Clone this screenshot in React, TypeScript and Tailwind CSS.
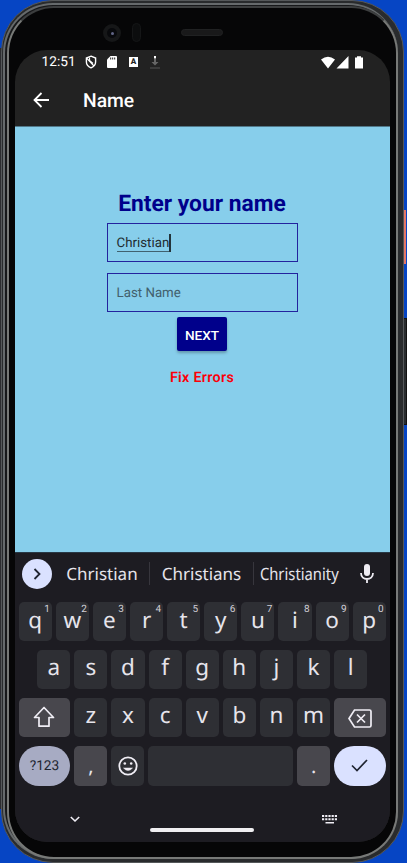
import type { ReactNode } from 'react';

const digits = ['1', '2', '3', '4', '5', '6', '7', '8', '9', '0'];

function Key({ children, hint, className = '' }: { children?: ReactNode; hint?: string; className?: string }) {
  return (
    <div
      className={`relative flex min-w-0 items-center justify-center rounded-[5px] leading-none text-[#e6e4eb] ${className}`}
    >
      {children}
      {hint && (
        <span className="absolute right-[2px] top-[2px] font-['Roboto'] text-[10px] leading-[11px] text-[#d0ced6]">{hint}</span>
      )}
    </div>
  );
}

function StatusBar() {
  return (
    <div className="flex h-6 items-center pl-[26.5px] pr-[27px] text-white">
      <span className="w-[43.500px] pt-[2px] text-[13.700px] leading-none">12:51</span>
      <svg className="h-[14px] w-3" viewBox="0 0 12 14" fill="none" stroke="#fff" strokeWidth="1.400">
        <path d="M6 1.200 10.600 3v4c0 2.800-2 4.800-4.600 5.800C3.400 11.800 1.400 9.800 1.400 7V3z" />
        <path d="M1.600 3.200 9 11M4.500 2.500v3l3.500 3" strokeWidth="1.200" />
      </svg>
      <svg className="ml-[10px] h-3 w-[10px]" viewBox="0 0 10 12">
        <path d="M3.500 0H9a1 1 0 0 1 1 1v10a1 1 0 0 1-1 1H1a1 1 0 0 1-1-1V3.500z" fill="#fff" />
        <path d="M3.700 1.500v2M5.700 1.500v2M7.700 1.500v2" stroke="#222" />
      </svg>
      <div className="ml-[12px] flex h-[10px] w-[9px] items-center justify-center bg-white text-[8px] font-black leading-none text-[#222]">
        A
      </div>
      <svg className="ml-3 h-[13px] w-[10px]" viewBox="0 0 10 13">
        <path d="M4 3h2v3h2.500L5 9.500 1.500 6H4z" fill="#666" />
        <path d="M4 0h2v2.500H4z" fill="#fff" />
        <path d="M0 12h10" stroke="#555" strokeWidth="1.200" />
      </svg>
      <svg className="ml-auto h-[13px] w-[42px]" viewBox="0 0 42 13" fill="#fff">
        <path d="M0 3.500Q7-2 14 3.500L7 12.500zM15.500 12.500 27.500 0v12.500zM34 1.500h2V.3h4v1.200h2v11h-8z" />
      </svg>
    </div>
  );
}

function Keyboard() {
  return (
    <div className="flex h-[290px] flex-col border-t border-[#283845] bg-[#1d1c22] pl-[3.700px] pr-[4.300px] font-['Noto_Sans',sans-serif]">
      <div className="flex h-[41px] items-center pl-[3.300px] text-[17px] leading-none text-[#e6e4eb]">
        <div className="flex h-[30px] w-[30px] items-center justify-center rounded-full bg-[#dae1ff]">
          <svg className="h-3 w-3" viewBox="0 0 12 12" fill="none" stroke="#202532" strokeWidth="1.800">
            <path d="m3.500 1 5 5-5 5" />
          </svg>
        </div>
        <span className="w-[97px] pb-px pl-[3px] text-center">
          <span className="inline-block">Christian</span>
        </span>
        <i className="h-[23px] w-px bg-[#37363d]" />
        <span className="w-[103px] pb-px text-center">Christians</span>
        <i className="h-[23px] w-px bg-[#37363d]" />
        <span className="flex w-[91px] justify-center pb-px">
          <span className="inline-block origin-center scale-x-[0.870]">Christianity</span>
        </span>
        <svg className="ml-[15.500px] h-[19px] w-[14px]" viewBox="0 0 14 19" fill="none">
          <rect x="4" y="0" width="6" height="12" rx="3" fill="#eeecf3" />
          <path d="M1 9c0 8 12 8 12 0M7 15v4" stroke="#eeecf3" strokeWidth="1.800" />
        </svg>
      </div>
      <div className="mt-[7.500px] grid h-[39px] grid-cols-10 gap-1 text-[22.500px]">
        {'qwertyuiop'.split('').map((c, i) => (
          <Key key={c} hint={digits[i]} className="bg-[#2e2f34] pb-[2px]">
            {c}
          </Key>
        ))}
      </div>
      <div className="mx-[18.500px] mt-[9px] grid h-[39px] grid-cols-9 gap-1 text-[22.500px]">
        {'asdfghjkl'.split('').map((c) => (
          <Key key={c} className="bg-[#2e2f34] pb-[3px]">
            {c}
          </Key>
        ))}
      </div>
      <div className="mt-[9px] flex h-[39px] gap-1 text-[22.500px]">
        <Key className="w-[51.600px] bg-[#48474d]">
          <svg className="h-[22px] w-[22px]" viewBox="0 0 22 22" fill="none" stroke="#f0eef5" strokeWidth="1.700">
            <path d="M11 1.500 1.500 11.500H6v8.700h10v-8.700h4.500z" strokeLinejoin="round" />
          </svg>
        </Key>
        {'zxcvbnm'.split('').map((c) => (
          <Key key={c} className="flex-1 bg-[#2e2f34] pb-[3px]">
            {c}
          </Key>
        ))}
        <Key className="w-[51.600px] bg-[#48474d]">
          <svg className="mt-[2px] h-[19px] w-[24px]" viewBox="0 0 24 19" fill="none" stroke="#f0eef5" strokeWidth="1.700">
            <path d="M6.500 1h15q1.500 0 1.500 1.500v14q0 1.500-1.500 1.500h-15L1 9.500z" />
            <path d="m9 5.500 8 8m0-8-8 8" />
          </svg>
        </Key>
      </div>
      <div className="mt-[9px] flex h-[40.500px] gap-1 text-[20px]">
        <div className="flex w-[51.600px] items-center justify-center rounded-full bg-[#a7abc3] pt-[2px] font-['Roboto'] text-[13.700px] text-[#202430]">
          ?123
        </div>
        <Key className="w-[33.100px] bg-[#48474d]">,</Key>
        <Key className="w-[33.100px] bg-[#2e2f34]">
          <svg className="h-[20px] w-[20px]" viewBox="0 0 20 20" fill="none" stroke="#f0eef5" strokeWidth="1.800">
            <circle cx="10" cy="10" r="8.700" />
            <path d="M5.500 12q4.500 5 9 0z" fill="#f0eef5" strokeWidth="0.500" />
            <circle cx="6.800" cy="7.500" r="1.300" fill="#f0eef5" stroke="none" />
            <circle cx="13.200" cy="7.500" r="1.300" fill="#f0eef5" stroke="none" />
          </svg>
        </Key>
        <Key className="flex-1 bg-[#2e2f34]" />
        <Key className="w-[33.100px] bg-[#48474d] pt-px">.</Key>
        <div className="flex w-[51.600px] items-center justify-center rounded-full bg-[#dae1ff]">
          <svg className="h-[13px] w-[17px]" viewBox="0 0 17 13" fill="none" stroke="#202532" strokeWidth="1.700">
            <path d="m1 6.500 5 5L16 1" />
          </svg>
        </div>
      </div>
      <div className="flex flex-1 items-start pl-[51.300px] pr-[48.700px] pt-[27px] text-[#f0eef5]">
        <svg className="mt-[2.500px] h-[7px] w-[10px]" viewBox="0 0 10 7" fill="none" stroke="currentColor" strokeWidth="1.600">
          <path d="m.8 1 4.200 4L9.200 1" />
        </svg>
        <div className="ml-[70px] mt-[15px] h-1 w-[104px] rounded-full bg-[#f0eff2]" />
        <svg className="ml-auto mt-[2px] h-[9px] w-[15px]" viewBox="0 0 15 9" stroke="currentColor" strokeWidth="2">
          <path d="M0 1h15M0 4.200h15" strokeDasharray="2.200 1" />
          <path d="M3.500 7.800h8.500" strokeWidth="1.600" />
        </svg>
      </div>
    </div>
  );
}

export default function App() {
  return (
    <div className="relative h-[863px] w-[407px] overflow-hidden bg-[#0645c4] font-['Roboto',sans-serif] [text-rendering:geometricPrecision]">
      <div className="absolute left-0 top-[48px] h-[761px] w-[6px] bg-[#2c2d30]" />
      <div className="absolute left-[50px] top-0 h-2 w-[302px] bg-[#56585a]" />
      <div className="absolute left-[403px] top-[210px] h-[54px] w-[3px] bg-[#e57868]" />
      <div className="absolute left-[402px] top-[318px] h-[107px] w-[5px] border border-[#111] bg-[#282b2d]" />
      <div className="relative ml-px h-[863px] w-[403px] rounded-[52px] border border-[#55585a] bg-[#292b2d] pl-px pr-[5px] pt-[2px]">
        <div className="h-[856px] rounded-[50px] border-b-2 border-l-2 border-t-2 border-[#666a6c] bg-[#17181a] pl-[2px] pt-px">
          <div className="h-[853px] rounded-[47px] border-2 border-[#777977] border-t-[#3c3e3f] bg-[#060607] px-[6px]">
            <div className="relative h-[42px]">
              <div className="absolute left-[88px] top-[16px] flex h-[18px] w-[18px] items-center justify-center rounded-full bg-[#161718]">
                <div className="flex h-[10px] w-[10px] items-center justify-center rounded-full bg-[#08090c]">
                  <i className="h-[3px] w-[3px] rounded-full bg-[#626687]" />
                </div>
              </div>
              <div className="absolute left-[117px] top-[15px] h-[19px] w-[9px] rounded-full border border-[#151617] bg-[#0c0d0e]" />
              <div className="absolute left-[166px] top-[21px] h-[7px] w-[42px] rounded-full border border-[#202122] bg-[#19191a]" />
            </div>
            <div className="flex h-[792px] w-[375px] flex-col overflow-hidden rounded-[32px] bg-[#222]">
              <StatusBar />
              <header className="flex h-[51.500px] items-center pl-[18px] text-white">
                <svg className="h-4 w-4" viewBox="0 0 16 16" fill="none" stroke="#fff" strokeWidth="1.800">
                  <path d="M16 8H1.500M8.500 1l-7 7 7 7" />
                </svg>
                <h1 className="ml-[34px] pt-[2px] text-[19.300px] font-medium leading-none">Name</h1>
              </header>
              <main className="flex flex-1 flex-col items-center border-t border-[#52798a] bg-[#87ceeb] pr-px">
                <h2 className="mt-[64.500px] text-[22.800px] font-bold leading-[26px] text-[#00008b]">Enter your name</h2>
                <div className="mt-[6px] flex h-[39px] w-[191px] items-center border border-[#23239e] pl-[9px] text-[13.300px] text-[#222c31]">
                  <span className="mt-[3px] border-b border-[#40616f] leading-[14px]">Christian</span>
                  <i className="h-[18px] w-[2px] bg-[#23343b]" />
                </div>
                <div className="mt-[11px] flex h-[39px] w-[191px] items-center border border-[#23239e] pl-[9px] pt-[3px] text-[13.300px] text-[#42606d]">
                  Last Name
                </div>
                <button className="mt-[5px] h-[34px] w-[50px] rounded-[2px] bg-[#00008b] pt-[2px] text-[13.600px] font-medium text-white shadow-[0_2px_3px_#00000044]">
                  NEXT
                </button>
                <p className="mt-[19px] text-[14.300px] font-semibold leading-4 tracking-[0.300px] text-[#fb0008]">Fix Errors</p>
              </main>
              <Keyboard />
            </div>
          </div>
        </div>
      </div>
    </div>
  );
}
